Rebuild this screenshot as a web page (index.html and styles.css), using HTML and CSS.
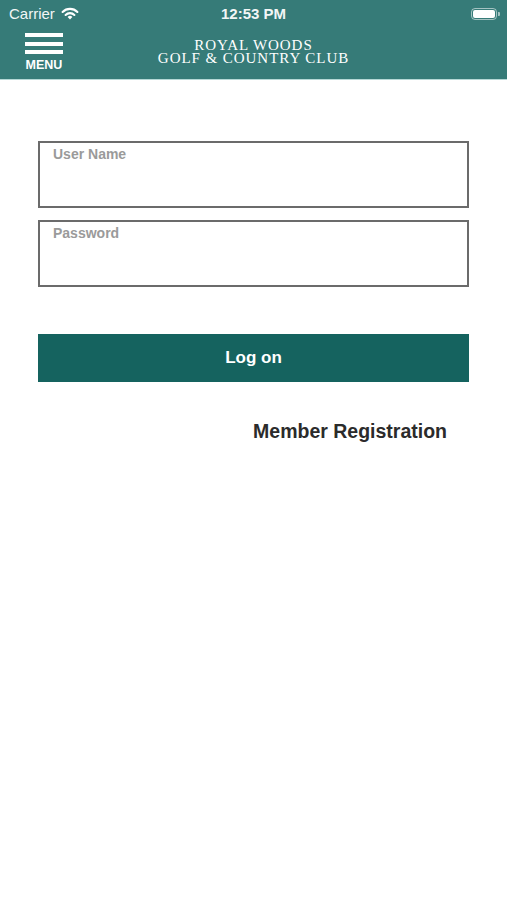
FILE: index.html
```html
<!DOCTYPE html>
<html lang="en">
<head>
    <meta charset="UTF-8">
    <meta name="viewport" content="width=device-width, initial-scale=1.0">
    <title>Royal Woods - Log on</title>
    <link rel="stylesheet" href="styles.css">
</head>
<body>
    <header class="header">
        <div class="status-bar">
            <div class="status-left">
                <span class="carrier">Carrier</span>
                <svg class="wifi" width="18" height="13" viewBox="0 0 18 13">
                    <path d="M9 12.5 L6.6 10 A3.4 3.4 0 0 1 11.4 10 Z" fill="#fff"/>
                    <path d="M4.6 8 A6.2 6.2 0 0 1 13.4 8" stroke="#fff" stroke-width="2.1" fill="none" stroke-linecap="round"/>
                    <path d="M1.6 5 A10.4 10.4 0 0 1 16.4 5" stroke="#fff" stroke-width="2.1" fill="none" stroke-linecap="round"/>
                </svg>
            </div>
            <span class="time">12:53 PM</span>
            <div class="status-right">
                <span class="battery"><span class="battery-level"></span></span>
                <span class="battery-cap"></span>
            </div>
        </div>
        <div class="nav-bar">
            <button class="menu-btn" type="button">
                <span class="menu-line"></span>
                <span class="menu-line"></span>
                <span class="menu-line"></span>
                <span class="menu-label">MENU</span>
            </button>
            <div class="club-title">
                <div>ROYAL WOODS</div>
                <div>GOLF &amp; COUNTRY CLUB</div>
            </div>
        </div>
    </header>

    <main class="content">
        <form class="login-form" id="login-form">
            <label class="field">
                <span class="field-label">User Name</span>
                <input type="text" name="username">
            </label>
            <label class="field">
                <span class="field-label">Password</span>
                <input type="password" name="password">
            </label>
            <button type="submit" class="btn-logon">Log on</button>
        </form>
        <a href="#" class="register-link">Member Registration</a>
    </main>
</body>
</html>
```

FILE: styles.css
```css
* {
    margin: 0;
    padding: 0;
    box-sizing: border-box;
}

body {
    background: #fff;
    font-family: "Liberation Sans", Arial, sans-serif;
    color: #333;
    width: 507px;
    height: 900px;
    overflow: hidden;
}

/* header */
.header {
    background: #367b78;
    height: 80px;
    border-bottom: 1px solid #b5d8d6;
    color: #fff;
}

.status-bar {
    height: 27px;
    display: flex;
    align-items: center;
    justify-content: space-between;
    padding: 0 7px 0 9px;
    position: relative;
}

.status-left {
    display: flex;
    align-items: center;
    gap: 6px;
}

.carrier {
    font-size: 15px;
    color: #f2f6f6;
}

.wifi {
    margin-top: -1px;
}

.time {
    position: absolute;
    left: 0;
    right: 0;
    text-align: center;
    font-size: 15px;
    font-weight: bold;
    color: #f2f6f6;
}

.status-right {
    display: flex;
    align-items: center;
}

.battery {
    width: 26px;
    height: 12px;
    border: 1px solid rgba(255, 255, 255, 0.55);
    border-radius: 4px;
    padding: 1px;
    display: flex;
}

.battery-level {
    flex: 1;
    background: #fff;
    border-radius: 2px;
}

.battery-cap {
    width: 2px;
    height: 4px;
    background: rgba(255, 255, 255, 0.55);
    border-radius: 0 1px 1px 0;
    margin-left: 1px;
}

.nav-bar {
    height: 52px;
    display: flex;
    align-items: flex-start;
    position: relative;
}

.menu-btn {
    background: none;
    border: none;
    width: 38px;
    margin: 6px 0 0 25px;
    display: flex;
    flex-direction: column;
    gap: 4.5px;
    cursor: pointer;
}

.menu-line {
    display: block;
    height: 4px;
    background: #fff;
}

.menu-label {
    font-family: "Liberation Sans", Arial, sans-serif;
    font-weight: bold;
    font-size: 12.5px;
    color: #fff;
    text-align: center;
    line-height: 11px;
    margin-top: 1px;
    margin-left: -1px;
    margin-right: -1px;
}

.club-title {
    position: absolute;
    left: 0;
    right: 0;
    top: 12px;
    text-align: center;
    font-family: "Liberation Serif", "Times New Roman", serif;
    font-size: 15px;
    line-height: 12.5px;
    color: #fff;
    letter-spacing: 0.95px;
}

/* form */
.content {
    padding: 61px 38px 0 38px;
}

.login-form {
    display: flex;
    flex-direction: column;
    gap: 12px;
}

.field {
    display: block;
    position: relative;
    height: 67px;
    border: 2px solid #6b6b6b;
}

.field-label {
    position: absolute;
    left: 13px;
    top: 3px;
    font-size: 14px;
    font-weight: bold;
    color: #9a9a9a;
}

.field input {
    width: 100%;
    height: 100%;
    border: none;
    outline: none;
    padding: 22px 13px 0;
    font-size: 15px;
    background: transparent;
}

.btn-logon {
    margin-top: 35px;
    height: 48px;
    background: #15635f;
    border: none;
    color: #fff;
    font-family: "Liberation Sans", Arial, sans-serif;
    font-size: 17px;
    font-weight: bold;
    cursor: pointer;
}

.register-link {
    display: block;
    margin: 38px 22px 0 0;
    text-align: right;
    font-size: 19.5px;
    font-weight: bold;
    color: #2b2b2b;
    text-decoration: none;
}
```
